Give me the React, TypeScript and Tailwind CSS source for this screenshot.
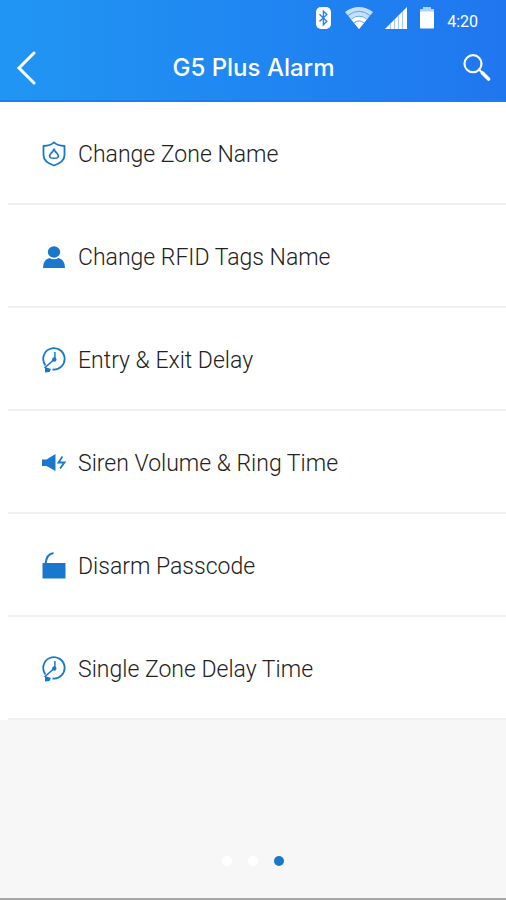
import type { ReactNode } from 'react';

function BluetoothIcon() {
  return (
    <svg width="15" height="22" viewBox="0 0 15 22" aria-hidden="true">
      <rect width="15" height="22" rx="5" fill="white" />
      <path d="M3.500 7.200 10.800 14.200 7.400 17.800V4.200L10.800 7.600 3.500 14.600" fill="none" stroke="#2583ee" strokeWidth="1.400" />
    </svg>
  );
}

function WifiIcon() {
  return (
    <svg width="28" height="22" viewBox="0 0 28 22" aria-hidden="true">
      <path d="M0 5Q14-5 28 5L14 22Z" fill="white" fillOpacity="0.75" />
      <path d="M5.500 11.500Q14 5.500 22.500 11.500L14 22Z" fill="white" />
      <path d="M3 8.500Q14 0 25 8.500M6 12.200Q14 6 22 12.200M9 15.800Q14 12 19 15.800" fill="none" stroke="#5ba3f4" strokeWidth="1" />
    </svg>
  );
}

function SignalIcon() {
  return (
    <svg width="22" height="22" viewBox="0 0 22 22" aria-hidden="true">
      <path d="M0 22 22 0V22Z" fill="white" />
      <path d="M5.500 17V22M9.500 13V22M13.500 9V22M17.500 5V22" stroke="#a5caf8" strokeWidth="1.200" />
    </svg>
  );
}

function BatteryIcon() {
  return (
    <svg width="16" height="22" viewBox="0 0 16 22" aria-hidden="true">
      <path d="M1 2H4V0H12V2H15V5H1Z" fill="#b3d2f9" />
      <path d="M1 4.500H15V20.500Q15 21.500 14 21.500H2Q1 21.500 1 20.500Z" fill="white" />
    </svg>
  );
}

function BackIcon() {
  return (
    <svg width="20" height="34" viewBox="0 0 20 34" fill="none" stroke="white" strokeWidth="3" strokeLinecap="round" aria-hidden="true">
      <path d="M18 2 3 17 18 32" />
    </svg>
  );
}

function SearchIcon() {
  return (
    <svg width="28" height="28" viewBox="0 0 28 28" fill="none" stroke="white" strokeLinecap="round" aria-hidden="true">
      <circle cx="10" cy="9.700" r="8.500" strokeWidth="2.200" />
      <path d="M16 15.500 19 18.500" strokeWidth="2" />
      <path d="M19.500 19 25.500 25" strokeWidth="3.600" />
    </svg>
  );
}

function ShieldIcon() {
  return (
    <svg width="24" height="26" viewBox="0 0 24 26" fill="none" stroke="#1a78cc" strokeWidth="1.800" strokeLinejoin="round" aria-hidden="true">
      <path d="M12 1.300Q15.500 4.700 22.500 5V14Q22.500 21 12 24.500Q1.500 21 1.500 14V5Q8.500 4.700 12 1.300Z" />
      <path d="M12 8Q12.500 10 15 12.300Q17.300 15 15.800 16.500Q15 17.300 12 17.300Q9 17.300 8.200 16.500Q6.700 15 9 12.300Q11.500 10 12 8Z" strokeWidth="1.600" />
    </svg>
  );
}

function PersonIcon() {
  return (
    <svg width="24" height="26" viewBox="0 0 24 26" fill="#1a78cc" aria-hidden="true">
      <ellipse cx="12" cy="8" rx="6.200" ry="5.800" />
      <path d="M1 24Q1 15.500 7.500 14Q12 16.600 16.500 14Q23 15.500 23 24Z" />
    </svg>
  );
}

function ClockIcon() {
  return (
    <svg width="24" height="26" viewBox="0 0 24 26" fill="none" stroke="#1a78cc" strokeWidth="1.800" aria-hidden="true">
      <path d="M3.500 18.500A10.700 10.700 0 1 1 10.500 22.500" />
      <path d="M2.500 21 11.500 13" strokeWidth="1.600" />
      <path d="M12.900 5V11.500" strokeWidth="1.500" />
      <circle cx="12.300" cy="12.500" r="2.200" fill="#1a78cc" stroke="none" />
      <path d="M3 20 9 22 7.500 25 3 25.500Z" fill="#1a78cc" stroke="none" />
    </svg>
  );
}

function SirenIcon() {
  return (
    <svg width="24" height="26" viewBox="0 0 24 26" fill="#1a78cc" aria-hidden="true">
      <path d="M0 9.500H4.500L13.500 4V21L4.500 16H0Z" />
      <path d="M20.500 6.500 16.500 12.500H22.500L18 18.500" fill="none" stroke="#1a78cc" strokeWidth="1.800" />
    </svg>
  );
}

function LockIcon() {
  return (
    <svg width="24" height="28" viewBox="0 0 24 28" aria-hidden="true">
      <path d="M3.500 12Q4.500 2 11.500 1" fill="none" stroke="#1a78cc" strokeWidth="2" />
      <path d="M0.500 11H23.500V26.500H0.500Z" fill="#1a78cc" />
    </svg>
  );
}

const settings: { label: string; icon: ReactNode }[] = [
  { label: 'Change Zone Name', icon: <ShieldIcon /> },
  { label: 'Change RFID Tags Name', icon: <PersonIcon /> },
  { label: 'Entry & Exit Delay', icon: <ClockIcon /> },
  { label: 'Siren Volume & Ring Time', icon: <SirenIcon /> },
  { label: 'Disarm Passcode', icon: <LockIcon /> },
  { label: 'Single Zone Delay Time', icon: <ClockIcon /> },
];

export default function App() {
  return (
    <div className="flex min-h-screen flex-col border-b-2 border-[#a8a8a8] bg-[#f7f7f7] font-['Inter',sans-serif]">
      <header className="border-b-2 border-[#1c7ee8] bg-linear-to-r from-[#2196f3] to-[#2076ef] text-white">
        {/* Status bar */}
        <div className="flex h-9 items-center justify-end gap-3 pr-7">
          <div className="flex items-center gap-[14px]">
            <BluetoothIcon />
            <WifiIcon />
          </div>
          <SignalIcon />
          <BatteryIcon />
          <time className="pt-2 font-['Roboto',sans-serif] text-base leading-5">4:20</time>
        </div>

        <div className="flex h-16 items-center justify-between pr-[15px] pl-4">
          <button type="button" aria-label="Back" className="flex w-7">
            <BackIcon />
          </button>
          <h1 className="text-2xl font-medium">G5 Plus Alarm</h1>
          <button type="button" aria-label="Search" className="flex w-7 justify-end">
            <SearchIcon />
          </button>
        </div>
      </header>

      <main className="flex grow flex-col">
        <ul className="bg-white pl-2">
          {settings.map((item) => (
            <li key={item.label} className="border-b-2 border-[#efefef]">
              <button type="button" className="flex h-[101px] w-full items-center gap-3 pt-[2px] pl-[34px] text-left">
                {item.icon}
                <span className="pt-1 font-['Roboto',sans-serif] text-[23px] font-light text-[#222222]">{item.label}</span>
              </button>
            </li>
          ))}
        </ul>

        {/* Page dots */}
        <nav aria-label="Pages" className="mt-auto flex justify-center gap-4 pb-8">
          <button type="button" aria-label="Page 1" className="size-[10px] rounded-full bg-white" />
          <button type="button" aria-label="Page 2" className="size-[10px] rounded-full bg-white" />
          <button type="button" aria-label="Page 3" aria-current="page" className="size-[10px] rounded-full bg-[#1a78cc]" />
        </nav>
      </main>
    </div>
  );
}
